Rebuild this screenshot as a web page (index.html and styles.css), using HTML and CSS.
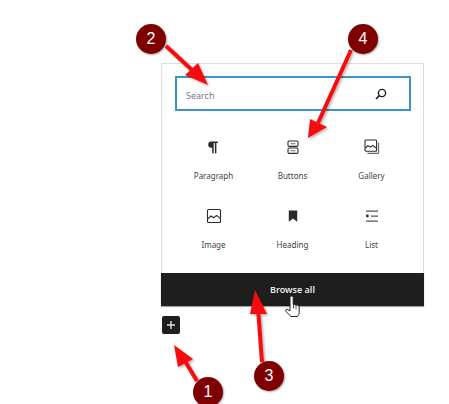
FILE: index.html
```html
<!DOCTYPE html>
<html lang="en">
<head>
<meta charset="utf-8">
<title>Block inserter</title>
<link rel="stylesheet" href="styles.css">
</head>
<body>
<div class="stage">
  <section class="inserter">
    <div class="search-wrap">
      <div class="search">
        <span class="placeholder">Search</span>
        <svg class="search-icon" width="14" height="14" viewBox="0 0 14 14"><circle cx="8" cy="6" r="3.6" fill="none" stroke="#1e1e1e" stroke-width="1.4"/><path d="M5.4 8.6 2 12" stroke="#1e1e1e" stroke-width="1.5" fill="none"/></svg>
      </div>
    </div>
    <div class="grid">
      <div class="block">
        <svg class="pilcrow" width="16" height="16" viewBox="0 0 16 16"><path d="M6.400 2.400h6.400v1.500h-1.400v10.400H9.900V3.900H8.700v10.400H7.200V8.800h-.8a3.200 3.200 0 0 1 0-6.400z" fill="#2b2b2b"/></svg>
        <span>Paragraph</span>
      </div>
      <div class="block">
        <svg width="16" height="16" viewBox="0 0 16 16" fill="none" stroke="#2b2b2b" stroke-width="1.100"><rect x="3" y="2" width="10" height="5.400" rx="1.200"/><rect x="3" y="9" width="10" height="5.400" rx="1.200"/><path d="M5.500 4.700h5M5.500 11.700h5" stroke="#666"/></svg>
        <span>Buttons</span>
      </div>
      <div class="block">
        <svg width="16" height="16" viewBox="0 0 16 16" fill="none" stroke="#2b2b2b" stroke-width="1.100"><rect x="1" y="1" width="11.600" height="11.200" rx="1"/><path d="M1.400 9 4 6.600l2.400 1.600 2.400-1.800 3.400 2.600"/><path d="M14.600 3.400v10a1 1 0 0 1-1 1H3.400" stroke="#666"/></svg>
        <span>Gallery</span>
      </div>
      <div class="block">
        <svg width="16" height="16" viewBox="0 0 16 16" fill="none" stroke="#2b2b2b" stroke-width="1.100"><rect x="1.500" y="1.500" width="13" height="13" rx="1"/><path d="M1.800 10.800 5 8l2.600 1.800L10.600 7.400l3.600 3"/></svg>
        <span>Image</span>
      </div>
      <div class="block">
        <svg width="16" height="16" viewBox="0 0 16 16"><path d="M3.800 2.500h8.400v11.300L8 10.600l-4.200 3.200z" fill="#2b2b2b"/></svg>
        <span>Heading</span>
      </div>
      <div class="block">
        <svg width="16" height="16" viewBox="0 0 16 16"><path d="M2 2.500h12v1.200H2zM7 7.500h7v1.200H7zM2 12.500h12v1.200H2z" fill="#555"/><circle cx="3.400" cy="8" r="1.400" fill="#2b2b2b"/></svg>
        <span>List</span>
      </div>
    </div>
    <div class="browse">Browse all</div>
  </section>
  <div class="add">
    <svg width="8" height="8" viewBox="0 0 8 8"><path d="M3.300 0h1.400v3.300H8v1.400H4.700V8H3.300V4.700H0V3.300h3.300z" fill="#e0e0e0"/></svg>
  </div>

  <svg class="arrows" width="449" height="404" viewBox="0 0 449 404">
    <defs>
      <filter id="soft" x="-20%" y="-20%" width="150%" height="150%"><feDropShadow dx="1.500" dy="1.500" stdDeviation="1.200" flood-color="#000" flood-opacity=".3"/></filter>
    </defs>
    <g filter="url(#soft)">
      <path class="shaft" d="M166 46 192 70"/>
      <path class="head" d="M208 85 185 75 198 63z"/>
      <path class="shaft" d="M351 50 318 123"/>
      <path class="head" d="M308 138 310 119 327 127z"/>
      <path class="shaft" d="M262 362 258 308"/>
      <path class="head" d="M255 290 267 314 250 314z"/>
      <path class="shaft" d="M197 381 185 361"/>
      <path class="head" d="M174 345 193 359 178 367z"/>
    </g>
    <path d="M290 297.500a1.600 1.600 0 0 1 3.200 0v6.800l4 .8c1.400.4 2 1.200 2 2.800v4.600c0 1.800-.8 3-2 4h-6.200l-4.800-4.800c-1.200-1.400-.4-2.600 1-2.400l2.800 1.600z" fill="#fff" stroke="#1e1e1e" stroke-width="1"/>
    <path d="M293.500 304.500v4M296 305v4" stroke="#1e1e1e" stroke-width=".8" fill="none"/>
  </svg>

  <span class="badge badge-one">1</span>
  <span class="badge badge-two">2</span>
  <span class="badge badge-three">3</span>
  <span class="badge badge-four">4</span>
</div>
</body>
</html>
```

FILE: styles.css
```css
* { box-sizing: border-box; }
html, body { margin: 0; padding: 0; background: #fff; }
body { width: 449px; height: 404px; overflow: hidden; font-family: "Noto Sans", "Open Sans", sans-serif; }

.stage {
  position: relative;
  width: 449px;
  height: 404px;
  padding: 63px 0 0 161px;
}

.inserter {
  width: 263px;
  height: 243px;
  border: 1px solid #dcdfe2;
  border-bottom: 0;
  display: flex;
  flex-direction: column;
  background: #fff;
}

.search-wrap { padding: 12px 12px 0 13px; }

.search {
  height: 35px;
  border: 2px solid #3d93c4;
  display: flex;
  align-items: center;
  justify-content: space-between;
  padding: 3px 22px 0 9px;
}
.placeholder { font-size: 9px; color: #757b80; }
.search-icon { margin: -3px -1px 0 0; }

.grid {
  display: grid;
  grid-template-columns: repeat(3, 79px);
  grid-auto-rows: 69px;
  margin: 19px 0 0 12px;
  flex: 1;
}
.block {
  display: flex;
  flex-direction: column;
  align-items: center;
  color: #3c3f42;
  font-size: 8px;
  line-height: 12px;
  gap: 15px;
  padding-top: 9px;
}
.block svg { display: block; }
.block .pilcrow { margin-left: -2px; }

.browse {
  height: 33px;
  background: #1e1e1e;
  color: #e8e8e8;
  font-size: 9px;
  font-weight: 600;
  display: flex;
  align-items: center;
  justify-content: center;
  box-shadow: 0 1px 1px rgba(0,0,0,.35);
  margin: 0 -1px;
}

.add {
  width: 18px;
  height: 18px;
  margin: 10px 0 0 1px;
  background: #1e1e1e;
  border-radius: 2px;
  display: flex;
  align-items: center;
  justify-content: center;
}

.arrows { position: absolute; left: 0; top: 0; }
.shaft { stroke: #f50d0d; stroke-width: 4; fill: none; }
.head { fill: #f50d0d; }

.badge {
  position: absolute;
  width: 30px;
  height: 30px;
  border-radius: 50%;
  background: #7f0000;
  color: #fff;
  font-family: "Liberation Sans", Arial, sans-serif;
  font-size: 16px;
  line-height: 30px;
  text-align: center;
  box-shadow: 1px 1px 2px rgba(0,0,0,.35);
}
.badge-one { left: 193px; top: 377px; }
.badge-two { left: 136px; top: 24px; }
.badge-three { left: 254px; top: 361px; }
.badge-four { left: 348px; top: 24px; }
```
